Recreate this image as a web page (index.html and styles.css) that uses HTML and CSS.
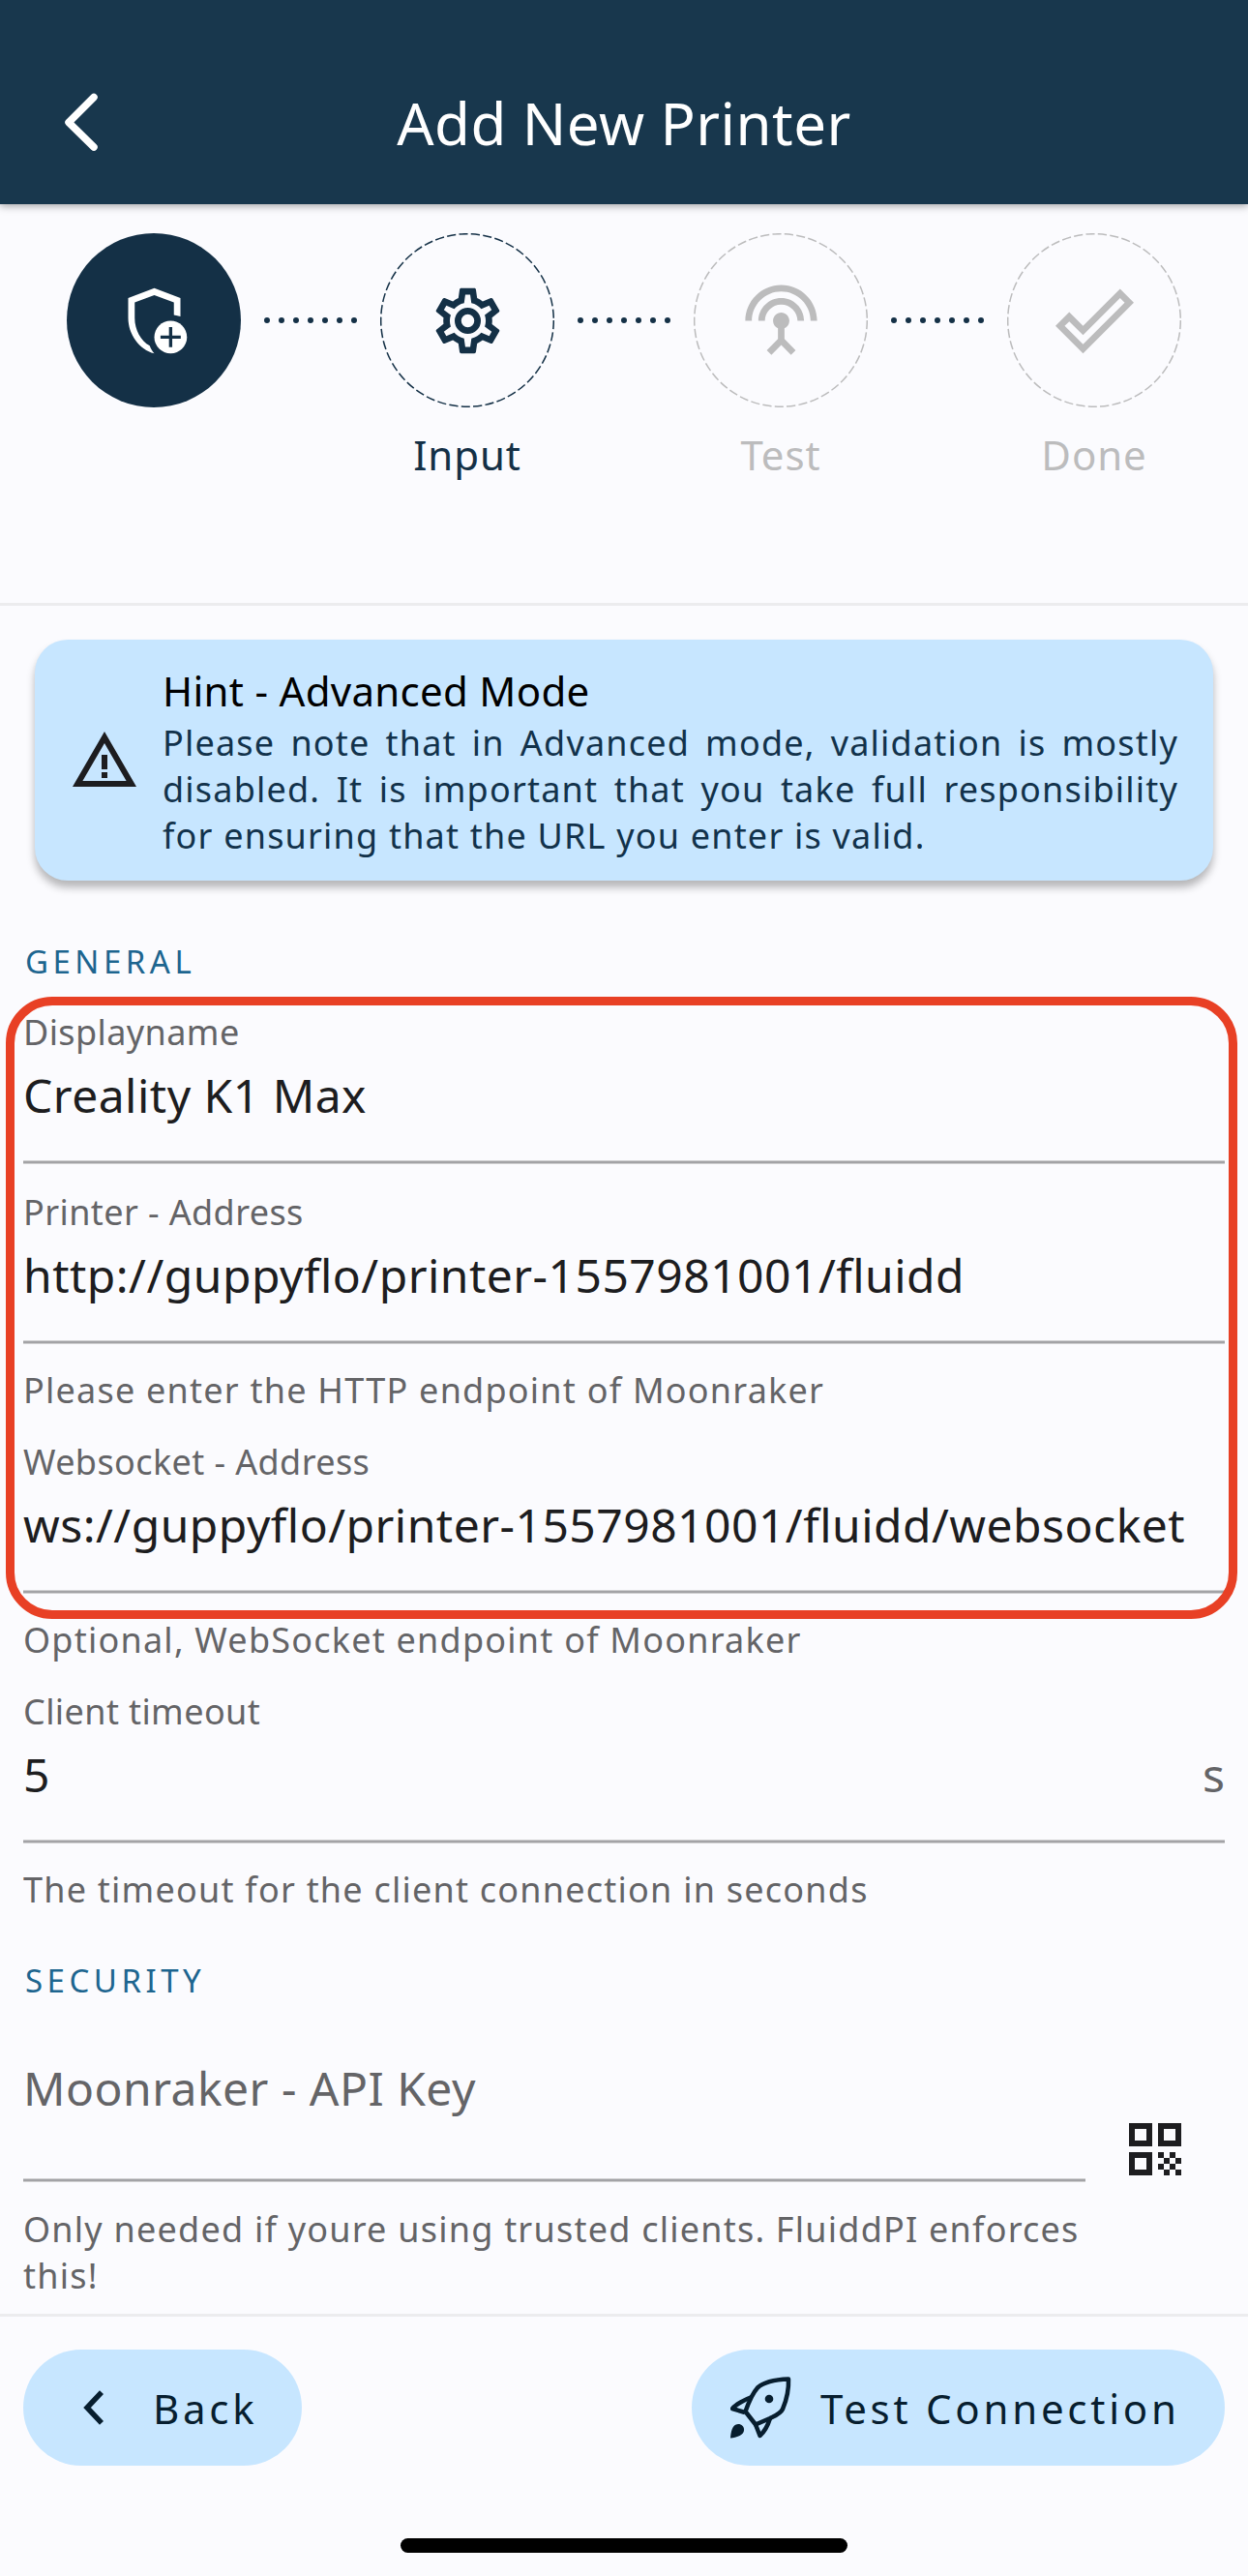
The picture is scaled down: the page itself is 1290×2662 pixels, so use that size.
FILE: index.html
```html
<!DOCTYPE html>
<html lang="en">
<head>
<meta charset="utf-8">
<title>Add New Printer</title>
<link rel="stylesheet" href="styles.css">
</head>
<body>
<header class="appbar">
  <svg class="appbar-back" viewBox="0 0 36 60"><path d="M31 4.500 5 30.500l26 25.500"/></svg>
  <h1 class="appbar-title">Add New Printer</h1>
</header>

<nav class="stepper">
  <div class="step step-done">
    <div class="step-circle">
      <svg class="step-icon" viewBox="0 0 24 24">
        <path d="M12 22c-.6-.7-1.100-1.500-1.400-2.400C7.900 18.200 6 14.800 6 11.090V6.390l6-2.250 6 2.250v3.810c.7.100 1.400.3 2 .5V5l-8-3-8 3v6.090c0 5.050 3.410 9.760 8 10.910z"/>
        <circle cx="17" cy="17" r="5"/>
        <path class="plus" d="M13.900 17h6.200M17 13.900v6.200"/>
      </svg>
    </div>
  </div>
  <svg class="dots" viewBox="0 0 96 6"><path d="M3 3H94"/></svg>
  <div class="step step-active">
    <div class="step-circle">
      <svg class="step-ring" viewBox="0 0 180 180"><circle cx="90" cy="90" r="89.300"/></svg>
      <svg class="step-icon" viewBox="0 0 24 24"><path d="M12,8A4,4 0 0,1 16,12A4,4 0 0,1 12,16A4,4 0 0,1 8,12A4,4 0 0,1 12,8M12,10A2,2 0 0,0 10,12A2,2 0 0,0 12,14A2,2 0 0,0 14,12A2,2 0 0,0 12,10M10,22C9.75,22 9.54,21.82 9.5,21.58L9.13,18.93C8.5,18.68 7.96,18.34 7.44,17.94L4.95,18.95C4.73,19.03 4.46,18.95 4.34,18.73L2.34,15.27C2.21,15.05 2.27,14.78 2.46,14.63L4.57,12.97L4.5,12L4.57,11L2.46,9.37C2.27,9.22 2.21,8.95 2.34,8.73L4.34,5.27C4.46,5.05 4.73,4.96 4.95,5.05L7.44,6.05C7.96,5.66 8.5,5.32 9.13,5.07L9.5,2.42C9.54,2.18 9.75,2 10,2H14C14.25,2 14.46,2.18 14.5,2.42L14.87,5.07C15.5,5.32 16.04,5.66 16.56,6.05L19.05,5.05C19.27,4.96 19.54,5.05 19.66,5.27L21.66,8.73C21.79,8.95 21.73,9.22 21.54,9.37L19.43,11L19.5,12L19.43,13L21.54,14.63C21.73,14.78 21.79,15.05 21.66,15.27L19.66,18.73C19.54,18.95 19.27,19.04 19.05,18.95L16.56,17.95C16.04,18.34 15.5,18.68 14.87,18.93L14.5,21.58C14.46,21.82 14.25,22 14,22H10M11.25,4L10.88,6.61C9.68,6.86 8.62,7.5 7.85,8.39L5.44,7.35L4.69,8.65L6.8,10.2C6.4,11.37 6.4,12.64 6.8,13.8L4.68,15.36L5.43,16.66L7.86,15.62C8.63,16.5 9.68,17.14 10.87,17.38L11.24,20H12.76L13.13,17.39C14.32,17.14 15.37,16.5 16.14,15.62L18.57,16.66L19.32,15.36L17.2,13.81C17.6,12.64 17.6,11.37 17.2,10.2L19.31,8.65L18.56,7.35L16.15,8.39C15.38,7.5 14.32,6.86 13.12,6.62L12.75,4H11.25Z"/></svg>
    </div>
    <span class="step-label">Input</span>
  </div>
  <svg class="dots" viewBox="0 0 96 6"><path d="M3 3H94"/></svg>
  <div class="step">
    <div class="step-circle">
      <svg class="step-ring" viewBox="0 0 180 180"><circle cx="90" cy="90" r="89.300"/></svg>
      <svg class="step-icon" viewBox="0 0 24 24"><path d="M12 5c-3.870 0-7 3.130-7 7h2c0-2.760 2.240-5 5-5s5 2.240 5 5h2c0-3.870-3.130-7-7-7zm1 9.290c.88-.39 1.500-1.260 1.500-2.290 0-1.380-1.120-2.500-2.500-2.500S9.500 10.620 9.500 12c0 1.020.62 1.900 1.500 2.290v3.300L7.590 21 9 22.410l3-3 3 3L16.410 21 13 17.590v-3.300zM12 1C5.930 1 1 5.930 1 12h2c0-4.970 4.030-9 9-9s9 4.030 9 9h2c0-6.070-4.930-11-11-11z"/></svg>
    </div>
    <span class="step-label">Test</span>
  </div>
  <svg class="dots" viewBox="0 0 96 6"><path d="M3 3H94"/></svg>
  <div class="step">
    <div class="step-circle">
      <svg class="step-ring" viewBox="0 0 180 180"><circle cx="90" cy="90" r="89.300"/></svg>
      <svg class="step-icon" viewBox="0 0 24 24"><path d="M19.78,2.2L24,6.42L8.44,22L0,13.55L4.22,9.33L8.44,13.55L19.78,2.2M19.78,5L8.44,16.36L4.22,12.19L2.81,13.55L8.44,19.17L21.19,6.42L19.78,5Z"/></svg>
    </div>
    <span class="step-label">Done</span>
  </div>
</nav>

<main class="form">
  <section class="hint">
    <svg class="hint-icon" viewBox="0 0 24 24"><path d="M12 5.990 19.530 19H4.470L12 5.990M12 2 1 21h22L12 2zm1 14h-2v2h2v-2zm0-6h-2v5h2v-5z"/></svg>
    <div class="hint-text">
      <h2 class="hint-title">Hint - Advanced Mode</h2>
      <p class="hint-body">Please note that in Advanced mode, validation is mostly disabled. It is important that you take full responsibility for ensuring that the URL you enter is valid.</p>
    </div>
  </section>

  <h3 class="section-title">GENERAL</h3>
  <div class="group">
    <div class="highlight"></div>
    <div class="field">
      <div class="label">Displayname</div>
      <div class="value">Creality K1 Max</div>
    </div>
    <div class="field">
      <div class="label">Printer - Address</div>
      <div class="value">http://guppyflo/printer-1557981001/fluidd</div>
    </div>
    <p class="helper">Please enter the HTTP endpoint of Moonraker</p>
    <div class="field">
      <div class="label">Websocket - Address</div>
      <div class="value">ws://guppyflo/printer-1557981001/fluidd/websocket</div>
    </div>
    <p class="helper">Optional, WebSocket endpoint of Moonraker</p>
    <div class="field">
      <div class="label">Client timeout</div>
      <div class="value"><span>5</span><span class="suffix">s</span></div>
    </div>
    <p class="helper">The timeout for the client connection in seconds</p>
  </div>

  <h3 class="section-title section-security">SECURITY</h3>
  <div class="key-row">
    <div class="key-field">
      <div class="key-input">Moonraker - API Key</div>
      <p class="helper helper-key">Only needed if youre using trusted clients. FluiddPI enforces this!</p>
    </div>
    <svg class="qr" viewBox="0 0 9 9"><path fill-rule="evenodd" d="M0 0h4v4H0zM1 1v2h2V1zM5 0h4v4H5zM6 1v2h2V1zM0 5h4v4H0zM1 6v2h2V6zM5 5h1v1H5zM7 5h1v1H7zM6 6h1v1H6zM8 6h1v1H8zM5 7h1v1H5zM7 7h1v1H7zM6 8h1v1H6zM8 8h1v1H8z"/></svg>
  </div>
</main>

<footer class="footer">
  <div class="actions">
    <button class="btn btn-back">
      <svg class="chevron" viewBox="0 0 21 36"><path d="M19 2.100 4 18l15 15.900"/></svg>
      <span class="btn-text">Back</span>
    </button>
    <button class="btn btn-test">
      <svg class="rocket" viewBox="0 0 64 64">
        <path d="M60 2.500C46 3 35 5 28 11.500 24 16 19 26 15.500 36L26 49.500l15-6.500c6-3 11-5 13-9.500C58.500 23 60.500 14 60 2.500z"/>
        <path d="M22 21C15 23.500 5 29 2 33l13 4M26 49.500 30.500 61C35 57 38.500 51 41 43"/>
        <circle class="solid" cx="40" cy="23" r="4.300"/>
        <path class="solid" d="M0 63.500C.5 58 1.500 49 8 49c4 0 6.500 3 6 6.500-.5 5-7 7-14 8z"/>
      </svg>
      <span class="btn-text">Test Connection</span>
    </button>
  </div>
  <div class="home-bar"></div>
</footer>
</body>
</html>
```
FILE: styles.css
```css
* {
  box-sizing: border-box;
  margin: 0;
  padding: 0;
}

body {
  width: 1290px;
  height: 2662px;
  overflow: hidden;
  display: flex;
  flex-direction: column;
  background: #fbfbfe;
  color: #1d1d20;
  font-family: "Noto Sans", sans-serif;
  font-kerning: normal;
}

h1, h2, h3 {
  font-weight: 400;
}

svg {
  display: block;
  flex: none;
}

/* App bar */
.appbar {
  flex: none;
  height: 211px;
  padding: 87px 66px 0;
  display: grid;
  grid-template-columns: 36px 1fr 36px;
  background: #18374d;
  color: #fff;
  box-shadow: 0 2px 8px rgba(0, 0, 0, 0.35);
}

.appbar-back {
  width: 36px;
  height: 60px;
  margin-top: 9px;
  fill: none;
  stroke: #fff;
  stroke-width: 7.5;
  stroke-linecap: round;
  stroke-linejoin: round;
}

.appbar-title {
  font-size: 60px;
  line-height: 80px;
  letter-spacing: 0.45px;
  text-align: center;
}

/* Stepper */
.stepper {
  flex: none;
  height: 415px;
  padding: 30px 69px 0;
  display: flex;
  justify-content: space-between;
  border-bottom: 3px solid #ececee;
}

.step {
  width: 180px;
  display: flex;
  flex-direction: column;
  align-items: center;
  color: #bcbcbd;
}

.step-active {
  color: #143046;
}

.step-circle {
  width: 180px;
  height: 180px;
  display: grid;
  place-items: center;
}

.step-done .step-circle {
  border-radius: 50%;
  background: #143046;
  color: #fff;
}

.step-ring,
.step-icon {
  grid-area: 1 / 1;
}

.step-ring {
  width: 180px;
  height: 180px;
  fill: none;
  stroke: currentColor;
  stroke-width: 1.5;
  stroke-dasharray: 9.2 3.27;
}

.step-icon {
  width: 81px;
  height: 81px;
  fill: currentColor;
}

.plus {
  stroke: #143046;
  stroke-width: 1;
}

.dots {
  width: 96px;
  height: 6px;
  margin-top: 87px;
  fill: none;
  stroke: #143046;
  stroke-width: 6;
  stroke-linecap: round;
  stroke-dasharray: 0 15;
}

.step-label {
  margin-top: 21px;
  font-size: 42px;
  line-height: 56px;
  letter-spacing: 0.9px;
}

/* Form */
.form {
  flex: none;
  height: 1765px;
  padding: 35px 24px 0;
}

.hint {
  height: 249px;
  margin: 0 12px;
  padding: 0 36px;
  display: flex;
  align-items: center;
  gap: 24px;
  border-radius: 34px;
  background: #c7e6ff;
  box-shadow: 0 7px 9px rgba(0, 0, 0, 0.28);
}

.hint-icon {
  width: 72px;
  height: 72px;
  fill: #1d1d20;
}

.hint-text {
  width: 1050px;
  padding-top: 2px;
}

.hint-title {
  color: #000;
  font-size: 42px;
  line-height: 57px;
  letter-spacing: 0.3px;
}

.hint-body {
  margin-top: 2px;
  color: #12324b;
  font-size: 36px;
  line-height: 48px;
  letter-spacing: 1.2px;
  text-align: justify;
}

.section-title {
  margin-top: 62px;
  padding-left: 2px;
  color: #1d658f;
  font-size: 33px;
  line-height: 44px;
  letter-spacing: 4.5px;
}

.section-security {
  margin-top: 48px;
}

.group {
  position: relative;
  padding-top: 27px;
}

/* Frame laid over the connection fields */
.highlight {
  position: absolute;
  left: -18px;
  top: 14px;
  width: 1273px;
  height: 643px;
  border: 9px solid #e84025;
  border-radius: 48px;
}

/* Soft-edged underline shared by all inputs */
.field,
.key-input {
  background: linear-gradient(#cfcfd1 1px, #a3a3a6 1px, #a3a3a6 3px, #cfcfd1 3px) bottom / 100% 4px no-repeat;
}

.field {
  height: 160px;
}

.field + .field {
  margin-top: 26px;
}

.label {
  color: #646467;
  font-size: 36px;
  line-height: 48px;
  letter-spacing: 0.4px;
}

.value {
  margin-top: 9px;
  display: flex;
  justify-content: space-between;
  font-size: 48px;
  line-height: 64px;
  letter-spacing: 0.48px;
}

.suffix {
  color: #646467;
  letter-spacing: 0;
}

.helper {
  margin-top: 24px;
  color: #646467;
  font-size: 36px;
  line-height: 48px;
  letter-spacing: 1.23px;
}

.helper + .field {
  margin-top: 26px;
}

.key-row {
  margin-top: 57px;
  display: flex;
  gap: 45px;
}

.key-field {
  width: 1098px;
}

.key-input {
  height: 129px;
  color: #646467;
  font-size: 48px;
  line-height: 64px;
  letter-spacing: 0.48px;
}

.helper-key {
  margin-top: 25px;
}

.qr {
  width: 54px;
  height: 54px;
  margin-top: 68px;
  fill: #1d1d20;
}

/* Footer */
.footer {
  flex: 1;
  display: flex;
  flex-direction: column;
  align-items: center;
  border-top: 3px solid #ececee;
}

.actions {
  align-self: stretch;
  padding: 34px 24px 0;
  display: flex;
  justify-content: space-between;
}

.btn {
  height: 120px;
  display: flex;
  align-items: center;
  border: 0;
  border-radius: 60px;
  background: #c7e6ff;
  color: #071e2f;
  font: 42px/56px "Noto Sans", sans-serif;
  letter-spacing: 3.75px;
}

.btn-text {
  padding-top: 2px;
}

.btn-back {
  width: 288px;
  padding-left: 62px;
  gap: 51px;
}

.btn-test {
  width: 551px;
  padding-left: 40px;
  gap: 29px;
}

.chevron {
  width: 21px;
  height: 36px;
  fill: none;
  stroke: currentColor;
  stroke-width: 5.500;
}

.rocket {
  width: 64px;
  height: 64px;
  fill: none;
  stroke: currentColor;
  stroke-width: 4.500;
  stroke-linejoin: round;
}

.solid {
  fill: currentColor;
  stroke: none;
}

.home-bar {
  width: 462px;
  height: 15px;
  margin-top: 75px;
  border-radius: 8px;
  background: #000;
}
```
